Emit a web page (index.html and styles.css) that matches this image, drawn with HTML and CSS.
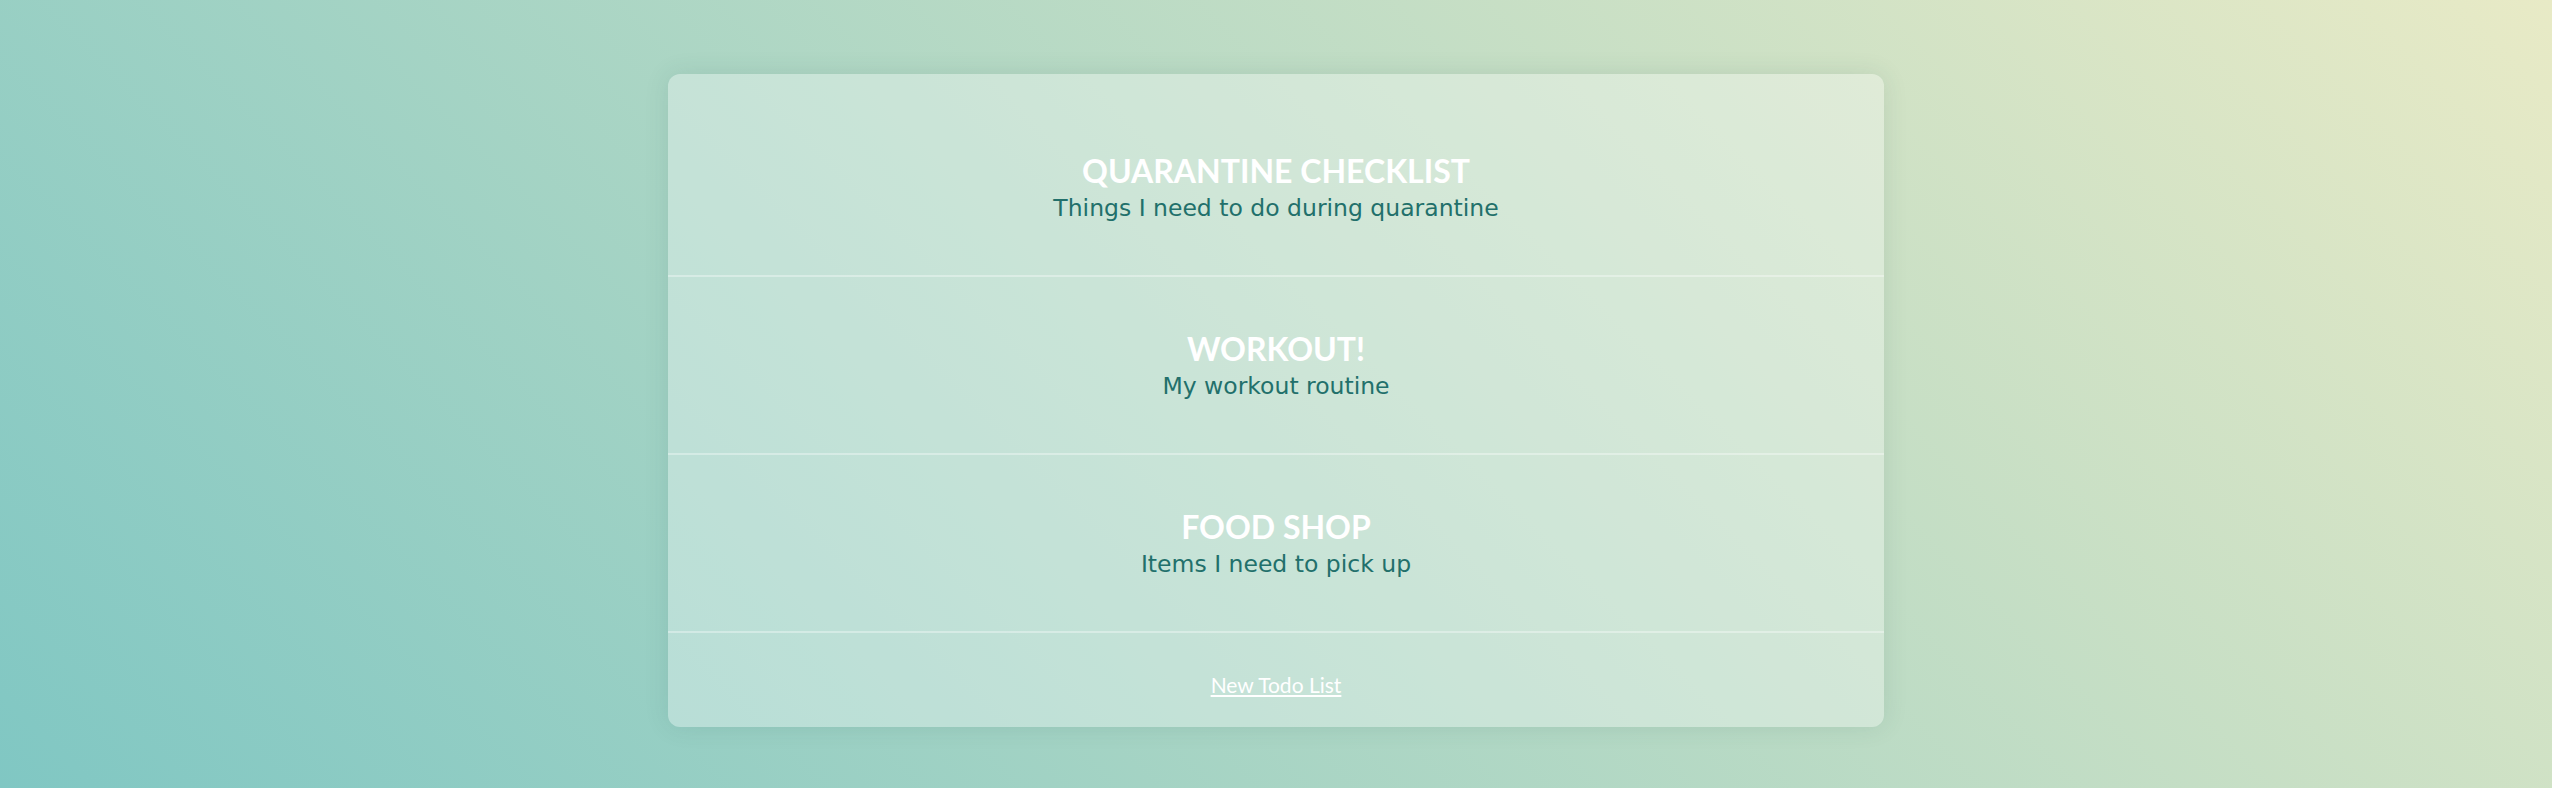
FILE: index.html
```html
<!DOCTYPE html>
<html>
<head>
<meta charset="utf-8">
<link rel="stylesheet" href="styles.css">
</head>
<body>
<main class="card">
  <section class="list">
    <h2 class="list-title">QUARANTINE CHECKLIST</h2>
    <p class="list-desc">Things I need to do during quarantine</p>
  </section>
  <section class="list">
    <h2 class="list-title">WORKOUT!</h2>
    <p class="list-desc">My workout routine</p>
  </section>
  <section class="list">
    <h2 class="list-title">FOOD SHOP</h2>
    <p class="list-desc">Items I need to pick up</p>
  </section>
  <footer class="card-footer">
    <a class="new-link" href="#">New Todo List</a>
  </footer>
</main>
</body>
</html>
```
FILE: styles.css
```css
html, body {
  margin: 0;
  padding: 0;
}
body {
  height: 788px;
  background: linear-gradient(45deg, #80c7c3 0%, #e8eac6 100%);
  font-family: "Lato", sans-serif;
  overflow: hidden;
}
.card {
  width: 1216px;
  margin: 74px auto 0;
  padding-top: 25px;
  box-sizing: border-box;
  height: 653px;
  border-radius: 12px;
  background: rgba(255, 255, 255, 0.32);
  box-shadow: 0 0 24px rgba(40, 90, 80, 0.12);
  display: flex;
  flex-direction: column;
}
.list {
  height: 178px;
  box-sizing: border-box;
  padding-top: 2px;
  border-bottom: 2px solid rgba(255, 255, 255, 0.35);
  display: flex;
  flex-direction: column;
  align-items: center;
  justify-content: center;
  text-align: center;
}
.list-title {
  margin: 0;
  font-family: "Lato", sans-serif;
  font-weight: 700;
  font-size: 32px;
  line-height: 36px;
  color: #ffffff;
}
.list-desc {
  margin: 3px 0 0;
  font-family: "DejaVu Sans", Verdana, sans-serif;
  font-size: 23.5px;
  line-height: 32px;
  color: #22706b;
}
.card-footer {
  flex: 1;
  display: flex;
  align-items: center;
  justify-content: center;
  padding-top: 8px;
}
.new-link {
  font-family: "Lato", sans-serif;
  font-size: 21px;
  color: #ffffff;
  text-decoration: underline;
}
```
